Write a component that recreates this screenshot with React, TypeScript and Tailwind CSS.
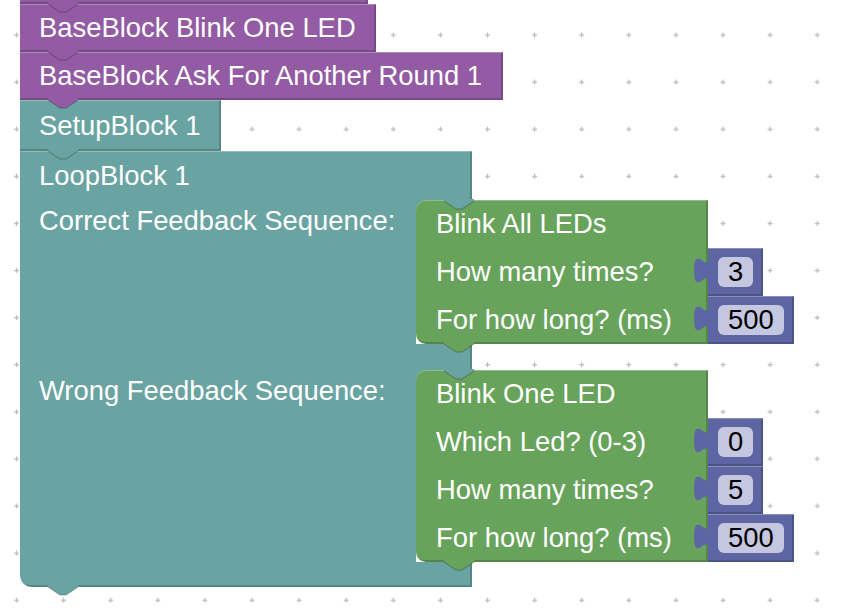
import React from "react";

const font = "font-['Liberation_Sans',Arial,sans-serif]";
const edge =
  "shadow-[inset_0_1px_0_rgba(255,255,255,0.28),inset_-2px_-2px_0_rgba(0,0,0,0.18)]";

const PURPLE = "#935ba3";
const TEAL = "#69a3a2";
const GREEN = "#68a35c";
const BLUE = "#5d66a3";

// little trapezoid that sits in the notch of the block below
function Tab({ fill, className }: { fill: string; className: string }) {
  return (
    <svg
      width="34"
      height="12"
      viewBox="0 0 34 12"
      className={`pointer-events-none absolute z-10 ${className}`}
    >
      <path d="M2 0H32V2L20 10H14L2 2Z" fill={fill} />
      <path
        d="M2 2L14 10H20L32 2"
        fill="none"
        stroke="rgba(0,0,0,0.18)"
        strokeWidth="1.5"
      />
    </svg>
  );
}

function StackBlock({
  bg,
  fill,
  w,
  h = "h-[48px]",
  children,
}: {
  bg: string;
  fill: string;
  w: string;
  h?: string;
  children?: React.ReactNode;
}) {
  return (
    <div
      className={`relative flex items-center whitespace-nowrap pl-[19px] ${w} ${h} ${bg} ${edge}`}
    >
      {children}
      <Tab fill={fill} className="left-[26px] top-[calc(100%-2px)]" />
    </div>
  );
}

function ValueBlock({ value }: { value: string }) {
  return (
    <div
      className={`relative flex h-[48px] shrink-0 items-center bg-[#5d66a3] px-[10px] ${edge}`}
    >
      <svg
        width="16"
        height="28"
        viewBox="0 0 16 28"
        className="absolute left-[-15px] top-[9px]"
      >
        <path d="M15.5 0c0 18-14.4-14.4-14.4 13.5s14.4-4.5 14.4 13.5Z" fill={BLUE} />
      </svg>
      <div className="flex h-[30px] items-center rounded-[6px] bg-[#c4c7df] px-[10px] leading-none text-black">
        {value}
      </div>
    </div>
  );
}

type Row = { label: string; value: string };

function GreenBlock({ title, rows }: { title: string; rows: Row[] }) {
  return (
    <div className="relative flex flex-col">
      <div className="flex h-[48px] w-[292px] items-center whitespace-nowrap rounded-tl-[10px] bg-[#68a35c] pl-[20px] shadow-[inset_0_1px_0_rgba(255,255,255,0.28),inset_-2px_0_0_rgba(0,0,0,0.18)]">
        {title}
      </div>
      {rows.map((r, i) => (
        <div key={r.label} className="flex">
          <div
            className={`flex h-[48px] w-[292px] shrink-0 items-center whitespace-nowrap bg-[#68a35c] pl-[20px] ${
              i === rows.length - 1
                ? "rounded-bl-[10px] shadow-[inset_-2px_-2px_0_rgba(0,0,0,0.18)]"
                : "shadow-[inset_-2px_0_0_rgba(0,0,0,0.18)]"
            }`}
          >
            {r.label}
          </div>
          <ValueBlock value={r.value} />
        </div>
      ))}
      <Tab fill={TEAL} className="left-[26px] top-[-1px]" />
      <Tab fill={GREEN} className="left-[26px] top-[calc(100%-2px)]" />
    </div>
  );
}

function StatementRow({
  label,
  title,
  rows,
}: {
  label: string;
  title: string;
  rows: Row[];
}) {
  return (
    <div className="flex">
      <div className="w-[396px] shrink-0 whitespace-nowrap bg-[#69a3a2] pl-[19px] leading-[42px]">
        {label}
      </div>
      <div className="relative shrink-0">
        <div className="absolute left-0 top-0 h-[12px] w-[12px] bg-[#69a3a2]" />
        <GreenBlock title={title} rows={rows} />
      </div>
    </div>
  );
}

function Grid() {
  return (
    <svg className="absolute inset-0 h-full w-full">
      <defs>
        <pattern
          id="ws-grid"
          x="14"
          y="32.5"
          width="47.1"
          height="47.1"
          patternUnits="userSpaceOnUse"
        >
          <path d="M0 2.5h5M2.5 0v5" stroke="#b9b9b9" strokeWidth="1.2" />
        </pattern>
      </defs>
      <rect width="100%" height="100%" fill="url(#ws-grid)" />
    </svg>
  );
}

export default function App() {
  return (
    <div
      className={`relative h-[608px] w-[842px] overflow-hidden bg-white text-[27.4px] text-white ${font}`}
    >
      <Grid />

      {/* block stack, placed on the workspace */}
      <div className="absolute left-[20px] top-[-44px] flex flex-col">
        <StackBlock bg="bg-[#935ba3]" fill={PURPLE} w="w-[348px]" />
        <StackBlock bg="bg-[#935ba3]" fill={PURPLE} w="w-[356px]">
          BaseBlock Blink One LED
        </StackBlock>
        <StackBlock bg="bg-[#935ba3]" fill={PURPLE} w="w-[483px]">
          BaseBlock Ask For Another Round 1
        </StackBlock>
        <StackBlock bg="bg-[#69a3a2]" fill={TEAL} w="w-[201px]" h="h-[51px]">
          SetupBlock 1
        </StackBlock>

        <div className="relative w-[452px]">
          <div className="flex h-[49px] items-center bg-[#69a3a2] pl-[19px] shadow-[inset_0_1px_0_rgba(255,255,255,0.28),inset_-2px_0_0_rgba(0,0,0,0.18)]">
            LoopBlock 1
          </div>
          <StatementRow
            label="Correct Feedback Sequence:"
            title="Blink All LEDs"
            rows={[
              { label: "How many times?", value: "3" },
              { label: "For how long? (ms)", value: "500" },
            ]}
          />
          <div className="h-[26px] bg-[#69a3a2] shadow-[inset_-2px_0_0_rgba(0,0,0,0.18)]" />
          <StatementRow
            label="Wrong Feedback Sequence:"
            title="Blink One LED"
            rows={[
              { label: "Which Led? (0-3)", value: "0" },
              { label: "How many times?", value: "5" },
              { label: "For how long? (ms)", value: "500" },
            ]}
          />
          <div className="relative h-[25px] rounded-bl-[12px] bg-[#69a3a2] shadow-[inset_-2px_-2px_0_rgba(0,0,0,0.18)]">
            <Tab fill={TEAL} className="left-[26px] top-[calc(100%-2px)]" />
          </div>
        </div>
      </div>
    </div>
  );
}
